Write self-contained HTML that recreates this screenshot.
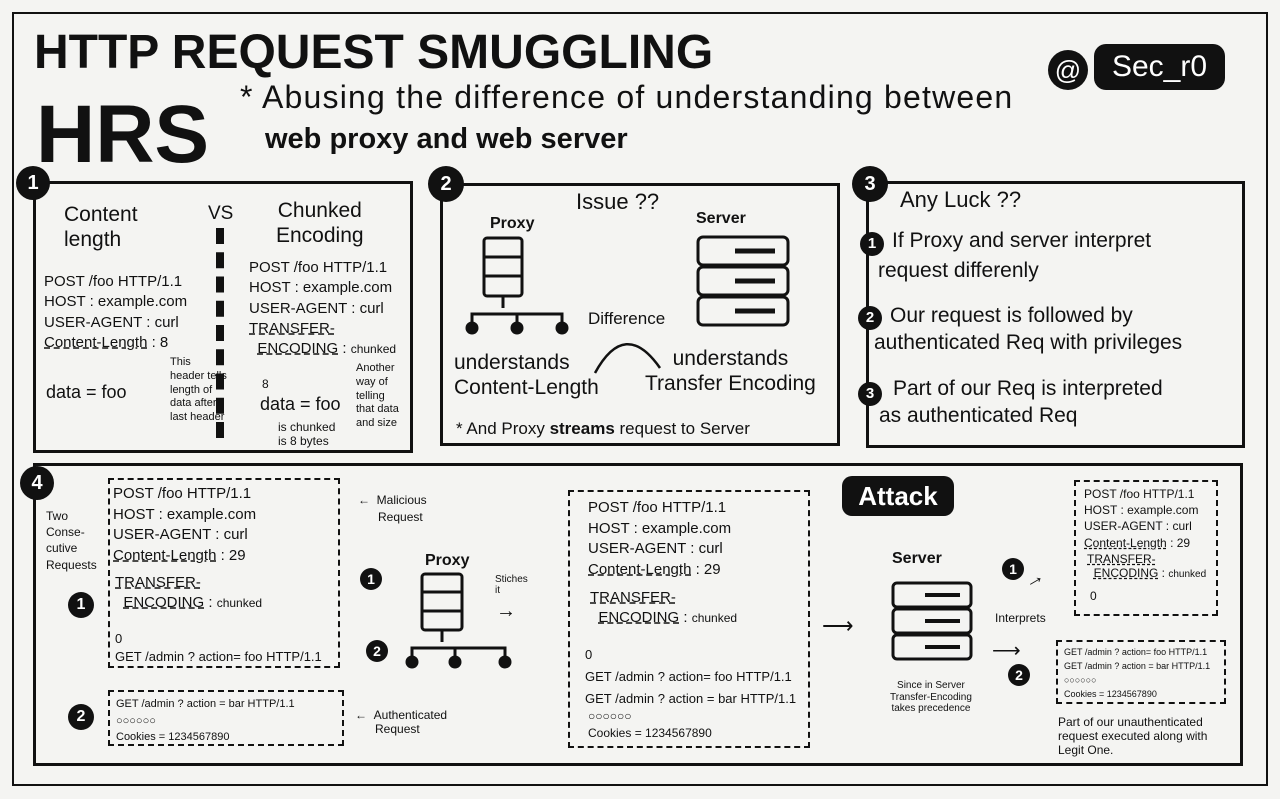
<!DOCTYPE html>
<html><head><meta charset="utf-8"><style>
*{margin:0;padding:0;box-sizing:border-box}
body{width:1280px;height:799px;background:#f4f4f2;position:relative;overflow:hidden;font-family:"Liberation Sans",sans-serif;color:#111}
.a{position:absolute;white-space:nowrap;line-height:1.1}
.box{position:absolute;border:3px solid #111}
.dash{position:absolute;border:2px dashed #111}
.num{position:absolute;width:30px;height:30px;border-radius:50%;background:#111;color:#fff;font-weight:bold;font-size:20px;text-align:center;line-height:30px}
.s{font-size:15px}
.m{font-size:17px}
.t{font-size:12px}
u{text-decoration:underline dashed}
</style></head><body>
<div class="box" style="left:12px;top:12px;width:1256px;height:774px;border-width:2px"></div>
<div class="a" style="left:34px;top:27px;font-size:48px;font-weight:900">HTTP REQUEST SMUGGLING</div>
<div class="a" style="left:36px;top:90px;font-size:82px;font-weight:900">HRS</div>
<div class="a" style="left:240px;top:80px;font-size:32px;letter-spacing:1.2px">* Abusing the difference of understanding between</div>
<div class="a" style="left:265px;top:124px;font-size:29px;font-weight:bold">web proxy and web server</div>
<div class="a" style="left:1048px;top:50px;width:40px;height:40px;border-radius:50%;background:#111;color:#fff;font-size:26px;text-align:center;line-height:40px">@</div>
<div class="a" style="left:1094px;top:44px;width:131px;height:46px;border-radius:12px;background:#111;color:#fff;font-size:30px;text-align:center;line-height:46px">Sec_r0</div>

<!-- box1 -->
<div class="box" style="left:33px;top:181px;width:380px;height:272px"></div>
<div class="num" style="left:16px;top:166px;width:34px;height:34px;line-height:34px">1</div>
<div class="a" style="left:64px;top:202px;font-size:21px;line-height:1.2">Content<br>length</div>
<div class="a" style="left:208px;top:204px;font-size:19px">VS</div>
<div style="position:absolute;left:216px;top:228px;height:210px;border-left:8px dashed #111"></div>
<div class="a" style="left:276px;top:198px;font-size:21px;line-height:1.2;text-align:center">Chunked<br>Encoding</div>
<div class="a s" style="left:44px;top:272px;line-height:1.35">POST /foo HTTP/1.1<br>HOST : example.com<br>USER-AGENT : curl<br><u>Content-Length</u> : 8</div>
<div class="a" style="left:46px;top:383px;font-size:18px">data = foo</div>
<div class="a" style="left:170px;top:356px;font-size:11px;line-height:1.25">This<br>header tells<br>length of<br>data after<br>last header</div>
<div class="a s" style="left:249px;top:258px;line-height:1.35">POST /foo HTTP/1.1<br>HOST : example.com<br>USER-AGENT : curl<br><u>TRANSFER-</u><br>&nbsp;&nbsp;<u>ENCODING</u> : <span class="t">chunked</span></div>
<div class="a t" style="left:262px;top:378px">8</div>
<div class="a" style="left:260px;top:395px;font-size:18px">data = foo</div>
<div class="a t" style="left:278px;top:420px;line-height:1.2">is chunked<br>is 8 bytes</div>
<div class="a" style="left:356px;top:362px;font-size:11px;line-height:1.25">Another<br>way of<br>telling<br>that data<br>and size</div>

<!-- box2 -->
<div class="box" style="left:440px;top:183px;width:400px;height:263px"></div>
<div class="num" style="left:428px;top:166px;width:36px;height:36px;line-height:36px">2</div>
<div class="a" style="left:576px;top:190px;font-size:22px">Issue ??</div>
<div class="a" style="left:490px;top:215px;font-size:16px;font-weight:bold">Proxy</div>
<svg style="position:absolute;left:462px;top:236px" width="120" height="100" fill="none" stroke="#111" stroke-width="3">
<rect x="22" y="2" width="38" height="58" rx="3"/><line x1="22" y1="21" x2="60" y2="21"/><line x1="22" y1="40" x2="60" y2="40"/>
<line x1="41" y1="60" x2="41" y2="72"/><path d="M10 88 V78 H100 V88 M55 78 V88"/>
<circle cx="10" cy="92" r="5" fill="#111"/><circle cx="55" cy="92" r="5" fill="#111"/><circle cx="100" cy="92" r="5" fill="#111"/>
</svg>
<div class="a" style="left:696px;top:210px;font-size:16px;font-weight:bold">Server</div>
<svg style="position:absolute;left:695px;top:234px" width="100" height="100" fill="none" stroke="#111" stroke-width="3">
<rect x="3" y="3" width="90" height="28" rx="5"/><rect x="3" y="33" width="90" height="28" rx="5"/><rect x="3" y="63" width="90" height="28" rx="5"/>
<line x1="40" y1="17" x2="80" y2="17" stroke-width="5"/><line x1="40" y1="47" x2="80" y2="47" stroke-width="5"/><line x1="40" y1="77" x2="80" y2="77" stroke-width="5"/>
</svg>
<div class="a m" style="left:588px;top:310px">Difference</div>
<svg style="position:absolute;left:590px;top:328px" width="80" height="50" fill="none" stroke="#111" stroke-width="2.5"><path d="M5 45 Q35 -10 70 40"/></svg>
<div class="a" style="left:454px;top:350px;font-size:21px;line-height:1.2">understands<br>Content-Length</div>
<div class="a" style="left:645px;top:346px;font-size:21px;line-height:1.2;text-align:center">understands<br>Transfer Encoding</div>
<div class="a m" style="left:456px;top:420px">* And Proxy <b>streams</b> request to Server</div>

<!-- box3 -->
<div class="box" style="left:866px;top:181px;width:379px;height:267px"></div>
<div class="num" style="left:852px;top:166px;width:36px;height:36px;line-height:36px">3</div>
<div class="a" style="left:900px;top:188px;font-size:22px">Any Luck ??</div>
<div class="num" style="left:860px;top:232px;width:24px;height:24px;line-height:24px;font-size:15px">1</div>
<div class="a" style="left:892px;top:226px;font-size:21px;line-height:1.45">If Proxy and server interpret<br><span style="margin-left:-14px">request differenly</span></div>
<div class="num" style="left:858px;top:306px;width:24px;height:24px;line-height:24px;font-size:15px">2</div>
<div class="a" style="left:890px;top:302px;font-size:21px;line-height:1.3">Our request is followed by<br><span style="margin-left:-16px">authenticated Req with privileges</span></div>
<div class="num" style="left:858px;top:382px;width:24px;height:24px;line-height:24px;font-size:15px">3</div>
<div class="a" style="left:893px;top:375px;font-size:21px;line-height:1.3">Part of our Req is interpreted<br><span style="margin-left:-14px">as authenticated Req</span></div>

<!-- box4 -->
<div class="box" style="left:33px;top:463px;width:1210px;height:303px"></div>
<div class="num" style="left:20px;top:466px;width:34px;height:34px;line-height:34px">4</div>
<div class="a t" style="left:46px;top:508px;line-height:1.35">Two<br>Conse-<br>cutive<br>Requests</div>
<div class="num" style="left:68px;top:592px;width:26px;height:26px;line-height:26px;font-size:16px">1</div>
<div class="dash" style="left:108px;top:478px;width:232px;height:190px"></div>
<div class="a s" style="left:113px;top:484px;line-height:1.38">POST /foo HTTP/1.1<br>HOST : example.com<br>USER-AGENT : curl<br><u>Content-Length</u> : 29</div>
<div class="a s" style="left:115px;top:573px;line-height:1.3"><u>TRANSFER-</u><br>&nbsp;&nbsp;<u>ENCODING</u> : <span class="t">chunked</span></div>
<div class="a" style="left:115px;top:630px;line-height:1.4;font-size:13px">0<br>GET /admin ? action= foo HTTP/1.1</div>
<div class="num" style="left:68px;top:704px;width:26px;height:26px;line-height:26px;font-size:16px">2</div>
<div class="dash" style="left:108px;top:690px;width:236px;height:56px"></div>
<div class="a" style="left:116px;top:696px;line-height:1.5;font-size:11px">GET /admin ? action = bar HTTP/1.1<br>○○○○○○<br>Cookies = 1234567890</div>
<div class="a t" style="left:358px;top:492px;line-height:1.4">← &nbsp;Malicious<br>&nbsp;&nbsp;&nbsp;&nbsp;&nbsp;&nbsp;Request</div>
<div class="a t" style="left:355px;top:708px;line-height:1.2">← &nbsp;Authenticated<br>&nbsp;&nbsp;&nbsp;&nbsp;&nbsp;&nbsp;Request</div>
<div class="num" style="left:360px;top:568px;width:22px;height:22px;line-height:22px;font-size:14px">1</div>
<div class="num" style="left:366px;top:640px;width:22px;height:22px;line-height:22px;font-size:14px">2</div>
<div class="a" style="left:425px;top:552px;font-size:16px;font-weight:bold">Proxy</div>
<svg style="position:absolute;left:400px;top:572px" width="120" height="100" fill="none" stroke="#111" stroke-width="3">
<rect x="22" y="2" width="40" height="56" rx="3"/><line x1="22" y1="20" x2="62" y2="20"/><line x1="22" y1="39" x2="62" y2="39"/>
<line x1="42" y1="58" x2="42" y2="70"/><path d="M12 86 V76 H105 V86 M55 76 V86"/>
<circle cx="12" cy="90" r="5" fill="#111"/><circle cx="55" cy="90" r="5" fill="#111"/><circle cx="105" cy="90" r="5" fill="#111"/>
</svg>
<div class="a" style="left:495px;top:574px;font-size:10px;line-height:1.1">Stiches<br>it</div>
<div class="a" style="left:496px;top:600px;font-size:20px">→</div>
<div class="dash" style="left:568px;top:490px;width:242px;height:258px"></div>
<div class="a s" style="left:588px;top:498px;line-height:1.38">POST /foo HTTP/1.1<br>HOST : example.com<br>USER-AGENT : curl<br><u>Content-Length</u> : 29</div>
<div class="a s" style="left:590px;top:588px;line-height:1.3"><u>TRANSFER-</u><br>&nbsp;&nbsp;<u>ENCODING</u> : <span class="t">chunked</span></div>
<div class="a" style="left:585px;top:644px;line-height:1.7;font-size:13px">0<br>GET /admin ? action= foo HTTP/1.1<br>GET /admin ? action = bar HTTP/1.1</div>
<div class="a t" style="left:588px;top:708px;line-height:1.45">○○○○○○<br>Cookies = 1234567890</div>
<div class="a" style="left:842px;top:476px;width:112px;height:40px;background:#111;color:#fff;border-radius:10px;font-size:26px;font-weight:bold;text-align:center;line-height:40px">Attack</div>
<div class="a" style="left:822px;top:614px;font-size:22px">⟶</div>
<div class="a" style="left:892px;top:550px;font-size:16px;font-weight:bold">Server</div>
<svg style="position:absolute;left:890px;top:580px" width="86" height="84" fill="none" stroke="#111" stroke-width="3">
<rect x="3" y="3" width="78" height="24" rx="4"/><rect x="3" y="29" width="78" height="24" rx="4"/><rect x="3" y="55" width="78" height="24" rx="4"/>
<line x1="35" y1="15" x2="70" y2="15" stroke-width="4"/><line x1="35" y1="41" x2="70" y2="41" stroke-width="4"/><line x1="35" y1="67" x2="70" y2="67" stroke-width="4"/>
</svg>
<div class="a" style="left:890px;top:680px;font-size:10px;line-height:1.15;text-align:center">Since in Server<br>Transfer-Encoding<br>takes precedence</div>
<div class="num" style="left:1002px;top:558px;width:22px;height:22px;line-height:22px;font-size:14px">1</div>
<div class="a" style="left:1024px;top:568px;font-size:20px;transform:rotate(-30deg)">→</div>
<div class="a t" style="left:995px;top:612px">Interprets</div>
<div class="a" style="left:992px;top:640px;font-size:20px">⟶</div>
<div class="num" style="left:1008px;top:664px;width:22px;height:22px;line-height:22px;font-size:14px">2</div>
<div class="dash" style="left:1074px;top:480px;width:144px;height:136px"></div>
<div class="a t" style="left:1084px;top:486px;line-height:1.35">POST /foo HTTP/1.1<br>HOST : example.com<br>USER-AGENT : curl<br><u>Content-Length</u> : 29</div>
<div class="a t" style="left:1087px;top:552px;line-height:1.2"><u>TRANSFER-</u><br>&nbsp;&nbsp;<u>ENCODING</u> : <span style="font-size:10px">chunked</span></div>
<div class="a t" style="left:1090px;top:590px">0</div>
<div class="dash" style="left:1056px;top:640px;width:170px;height:64px"></div>
<div class="a" style="left:1064px;top:646px;font-size:9px;line-height:1.55">GET /admin ? action= foo HTTP/1.1<br>GET /admin ? action = bar HTTP/1.1<br>○○○○○○<br>Cookies = 1234567890</div>
<div class="a t" style="left:1058px;top:716px;line-height:1.15">Part of our unauthenticated<br>request executed along with<br>Legit One.</div>
</body></html>
